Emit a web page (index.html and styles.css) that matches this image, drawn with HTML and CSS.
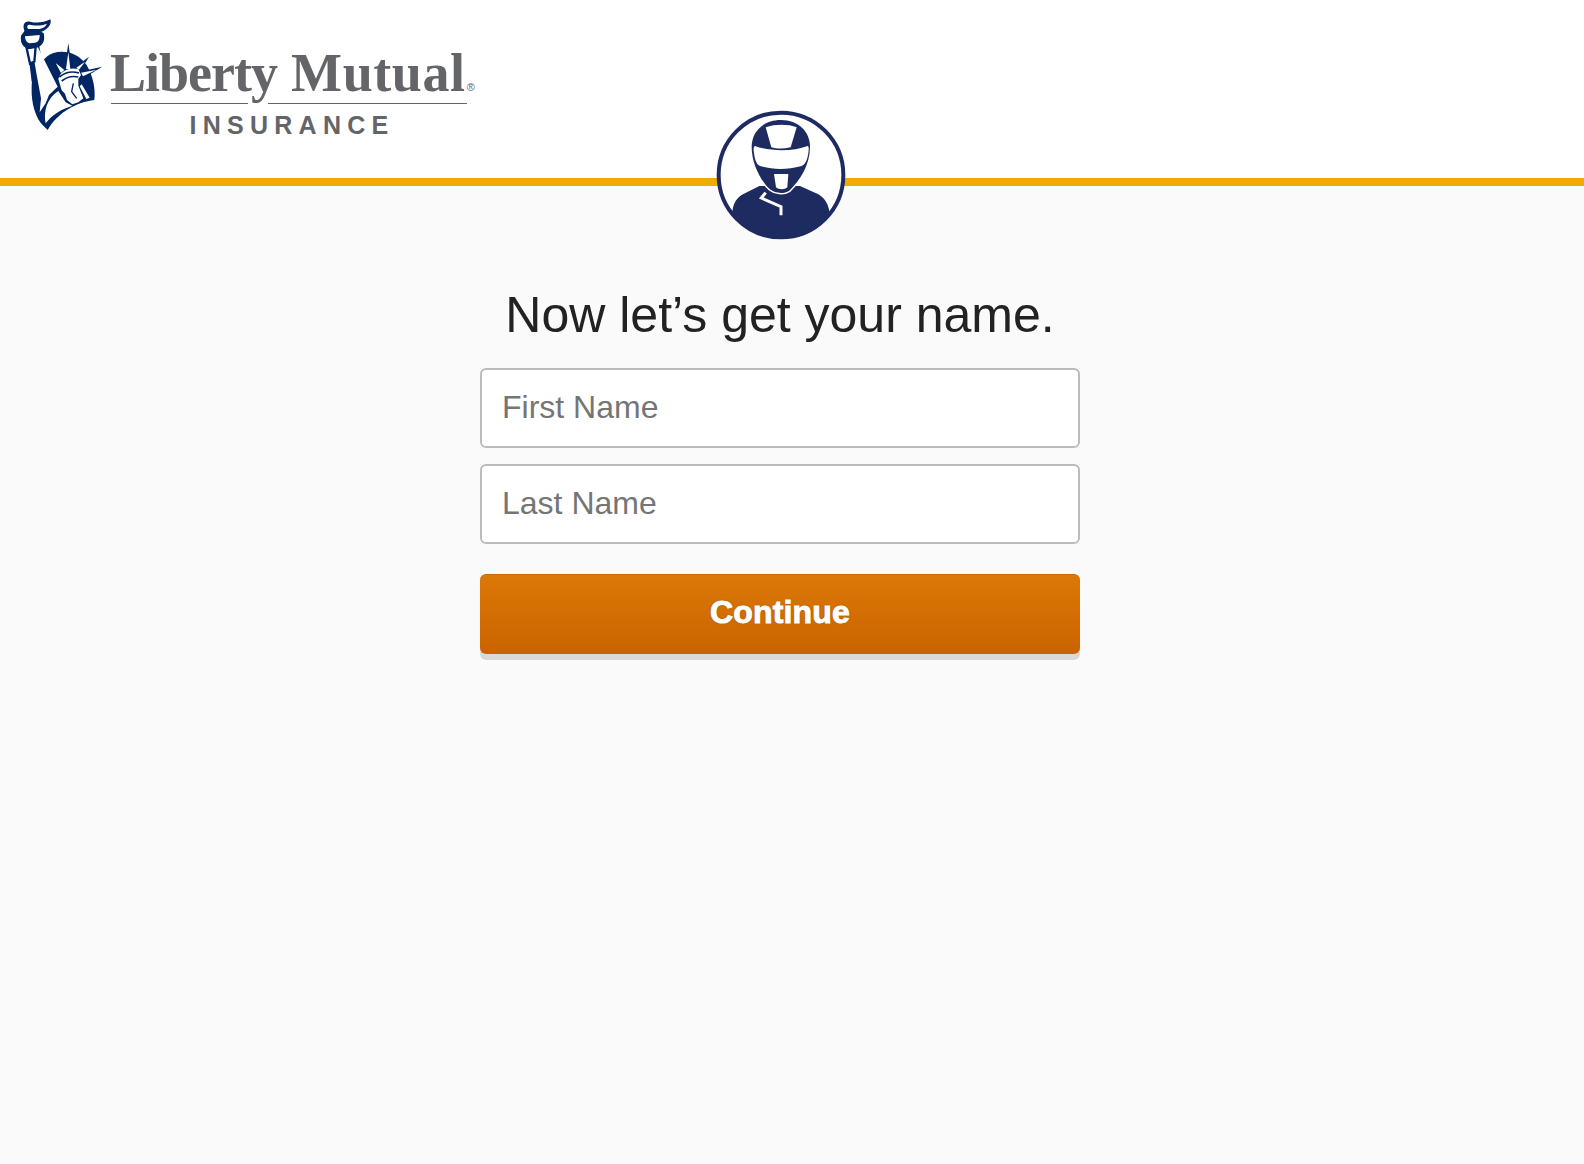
FILE: index.html
```html
<!DOCTYPE html>
<html lang="en">
<head>
    <meta charset="UTF-8">
    <title>Liberty Mutual Insurance</title>
    <link rel="stylesheet" href="styles.css">
</head>
<body>
    <div class="header">
        <div class="logo">
            <svg class="statue" viewBox="0 0 285 360" aria-hidden="true">
                <!-- disc behind the statue -->
                <path fill="#002663" d="M95 125 C125 100 185 105 215 150 C235 185 242 225 238 255 C185 262 130 290 98 345 L85 332 C62 310 48 265 50 215 C50 190 58 160 70 150 Z"/>
                <!-- crown rays -->
                <path fill="#002663" d="M160 85 L172 165 L148 165 Z M222 125 L195 170 L178 158 Z M262 155 L205 190 L193 170 Z M107 130 L152 165 L135 182 Z"/>
                <path fill="#fff" d="M160 112 L166 162 L153 162 Z M210 140 L192 164 L184 158 Z M245 164 L204 184 L198 173 Z M122 144 L148 165 L138 174 Z"/>
                <!-- arm and robe -->
                <path fill="#002663" d="M38 100 L72 90 L80 130 L60 200 L50 200 Z"/>
                <path fill="#fff" d="M68 95 L50 100 L60 150 L66 185 L78 250 L74 292 L92 265 L102 240 L128 215 Z"/>
                <path fill="#fff" d="M92 325 C85 290 95 250 130 228 L152 262 L172 272 C140 282 110 300 92 325 Z"/>
                <path fill="#fff" d="M102 347 C125 300 175 270 240 257 L240 263 C185 275 135 305 110 350 Z"/>
                <!-- face and crown -->
                <path fill="#fff" d="M130 192 C135 170 160 155 190 162 L198 180 L190 192 L190 212 L205 250 L190 262 L172 268 L156 255 L150 236 L140 226 Z"/>
                <path fill="none" stroke="#002663" stroke-width="5" d="M133 186 C150 172 172 168 192 174 M140 198 C155 186 172 182 190 186"/>
                <path fill="none" stroke="#002663" stroke-width="4" d="M175 205 L170 230 L185 250"/>
                <path fill="#fff" d="M194 214 L200 208 L224 248 L214 252 Z"/>
                <!-- torch -->
                <path fill="#fff" stroke="#002663" stroke-width="7" d="M35 100 L62 95 L58 140 L45 146 Z"/>
                <path fill="#002663" d="M18 62 C15 85 25 98 42 102 L70 97 C87 88 90 72 86 55 L70 44 L30 46 Z"/>
                <path fill="#fff" d="M30 64 L74 60 C74 75 69 82 60 83 L44 85 C36 83 30 75 30 64 Z"/>
                <path fill="#002663" d="M30 50 C20 32 28 16 45 20 C65 25 85 23 106 13 C112 28 97 44 80 50 Z"/>
                <path fill="#fff" d="M40 42 C33 34 38 27 48 30 C65 33 82 32 96 26 C93 34 84 40 74 42 Z"/>
            </svg>
            <div class="wordmark">
                <div class="wordmark-name"><span class="word-first">Liberty</span> Mutual<span class="reg">®</span></div>
                <div class="wordmark-rule">
                    <div class="rule-left"></div>
                    <div class="rule-right"></div>
                </div>
                <div class="wordmark-sub">INSURANCE</div>
            </div>
        </div>
        <svg class="avatar" viewBox="0 0 480 450" aria-hidden="true">
            <defs>
                <clipPath id="avatarClip"><circle cx="243" cy="225" r="187"/></clipPath>
            </defs>
            <circle cx="243" cy="225" r="187" fill="#fff" stroke="#1e2b61" stroke-width="12"/>
            <g clip-path="url(#avatarClip)">
                <path fill="#1e2b61" d="M98 328 C103 300 118 288 135 280 L178 258 L300 258 L345 278 C370 288 382 305 387 328 L400 450 L80 450 Z"/>
            </g>
            <path fill="#1e2b61" stroke="#fff" stroke-width="9" paint-order="stroke" d="M243 60 C295 60 330 95 330 140 C330 195 300 240 268 272 C250 283 225 280 210 268 C185 245 155 195 155 140 C155 95 190 60 243 60 Z"/>
            <path fill="#fff" d="M197 82 C225 72 265 72 290 82 L272 142 C250 147 230 147 214 142 Z"/>
            <path fill="#fff" d="M165 138 C210 155 280 155 323 138 C328 140 326 150 325 160 C322 180 315 195 305 198 C260 210 220 210 180 198 C170 195 165 180 162 160 C160 150 160 140 165 138 Z"/>
            <path fill="#fff" d="M222 222 L265 222 L262 262 C255 270 235 270 228 262 Z"/>
            <path fill="none" stroke="#fff" stroke-width="9" d="M197 278 L184 294 L243 320 L243 346"/>
        </svg>
    </div>

    <div class="content">
        <h1>Now let’s get your name.</h1>
        <input class="text-input" type="text" placeholder="First Name">
        <input class="text-input" type="text" placeholder="Last Name">
        <button class="continue-btn">Continue</button>
    </div>
</body>
</html>
```

FILE: styles.css
```css
* {
    margin: 0;
    padding: 0;
    box-sizing: border-box;
}

html, body {
    height: 100%;
}

body {
    font-family: "Liberation Sans", Arial, sans-serif;
    background: #fafafa;
    color: #222;
}

.header {
    position: relative;
    height: 186px;
    background: #fff;
    border-bottom: 8px solid #f0ab00;
}

.logo {
    display: flex;
    align-items: flex-start;
    padding: 15px 0 0 15px;
}

.statue {
    width: 95px;
    height: 120px;
    flex: none;
}

.wordmark {
    width: 372px;
    color: #636569;
}

.wordmark-name {
    font-family: "Liberation Serif", serif;
    font-size: 54px;
    font-weight: bold;
    letter-spacing: 0.6px;
    line-height: 60px;
    margin-top: 28px;
    white-space: nowrap;
}

.word-first {
    letter-spacing: -1px;
}

.reg {
    font-family: "Liberation Sans", sans-serif;
    font-size: 11px;
    font-weight: normal;
    letter-spacing: 0;
    margin-left: 1px;
}

.wordmark-rule {
    display: flex;
    gap: 20px;
    width: 356px;
    margin-left: 1px;
    margin-top: -14px;
}

.rule-left {
    width: 137px;
    height: 1px;
    background: #636569;
}

.rule-right {
    flex: 1;
    height: 1px;
    background: #636569;
}

.wordmark-sub {
    width: 360px;
    margin-left: 2px;
    text-align: center;
    font-size: 25px;
    font-weight: bold;
    line-height: 26px;
    letter-spacing: 6.25px;
    margin-top: 8px;
}

.avatar {
    position: absolute;
    left: 700px;
    top: 100px;
    width: 160px;
    height: 150px;
}

.content {
    width: 600px;
    margin-left: 480px;
    padding-top: 104px;
    display: flex;
    flex-direction: column;
}

.content h1 {
    font-size: 50px;
    font-weight: normal;
    line-height: 50px;
    text-align: center;
    white-space: nowrap;
    margin-bottom: 28px;
}

.text-input {
    width: 100%;
    height: 80px;
    padding: 0 20px 2px;
    margin-bottom: 16px;
    background: #fff;
    border: 2px solid #bbb;
    border-radius: 6px;
    font-family: "Liberation Sans", Arial, sans-serif;
    font-size: 32px;
}

.text-input::placeholder {
    color: #757575;
    opacity: 1;
}

.continue-btn {
    width: 100%;
    height: 80px;
    margin-top: 14px;
    padding-bottom: 4px;
    border: none;
    border-top: 1px solid #c96a00;
    border-radius: 6px;
    background: linear-gradient(#db7907, #ca6300);
    box-shadow: 0 6px 0 #d9d9d9;
    color: #fff;
    font-family: "Liberation Sans", Arial, sans-serif;
    font-size: 32px;
    font-weight: bold;
    letter-spacing: 0.2px;
    -webkit-text-stroke: 1px #fff;
    text-shadow: 0 0 2px #7a3d00;
    cursor: pointer;
}
```
